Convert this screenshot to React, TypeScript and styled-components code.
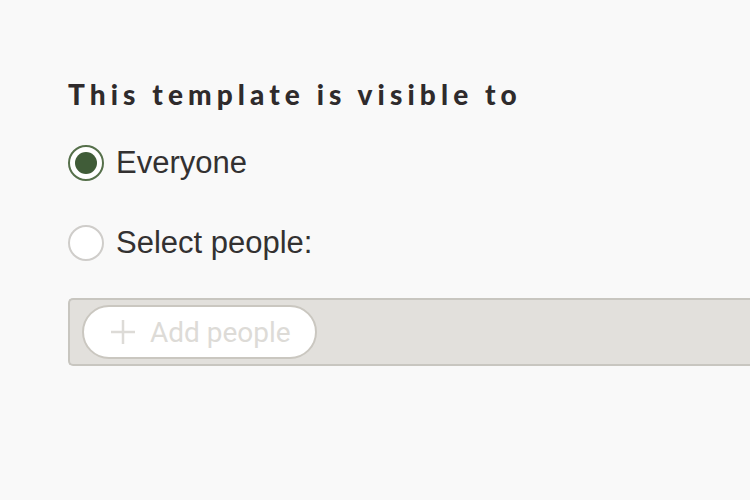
import styled, { createGlobalStyle } from "styled-components";

const GlobalStyle = createGlobalStyle`
  html, body {
    margin: 0;
    padding: 0;
    background: #f9f9f9;
    width: 750px;
    height: 500px;
    overflow: hidden;
  }
`

const Page = styled.div`
  padding: 77px 0 0 68px;
  font-family: "Liberation Sans", Arial, sans-serif;
`

const Title = styled.h2`
  margin: 0 0 34px 0;
  font-family: "Lato", sans-serif;
  font-weight: 900;
  font-size: 28px;
  letter-spacing: 5.1px;
  color: #2f2b2c;
  line-height: 34px;
`

const Options = styled.div`
  display: flex;
  flex-direction: column;
  gap: 44px;
`

const Option = styled.label`
  display: flex;
  align-items: center;
  gap: 12px;
  font-size: 31px;
  color: #333131;
  height: 36px;
`

const Radio = styled.span<{ checked?: boolean }>`
  width: 36px;
  height: 36px;
  flex-shrink: 0;
  box-sizing: border-box;
  border-radius: 50%;
  background: #fff;
  border: 2px solid ${p => (p.checked ? "#56704b" : "#cfcdca")};
  display: flex;
  align-items: center;
  justify-content: center;

  &::after {
    content: "";
    display: ${p => (p.checked ? "block" : "none")};
    width: 22px;
    height: 22px;
    border-radius: 50%;
    background: #405c38;
  }
`

const PeopleBox = styled.div`
  margin-top: 37px;
  height: 68px;
  box-sizing: border-box;
  background: #e2e0dc;
  border: 2px solid #c8c6c0;
  border-right: none;
  border-radius: 5px 0 0 5px;
  display: flex;
  align-items: center;
  padding-left: 12px;
`

const AddButton = styled.button`
  display: flex;
  align-items: center;
  gap: 14px;
  height: 54px;
  width: 235px;
  box-sizing: border-box;
  padding: 0 0 0 26px;
  background: #fff;
  border: 2px solid #cac7c0;
  border-radius: 27px;
  font-family: "Roboto", sans-serif;
  font-size: 28px;
  color: #dddbd7;
`

export default function App() {
  return (
    <>
      <GlobalStyle />
      <Page>
        <Title>This template is visible to</Title>
        <Options>
          <Option><Radio checked />Everyone</Option>
          <Option><Radio />Select people:</Option>
        </Options>
        <PeopleBox>
          <AddButton>
            <svg width="26" height="26" viewBox="0 0 26 26">
              <path d="M13 1v24M1 13h24" stroke="#dddbd7" strokeWidth="2.5" fill="none" />
            </svg>
            Add people
          </AddButton>
        </PeopleBox>
      </Page>
    </>
  )
}
